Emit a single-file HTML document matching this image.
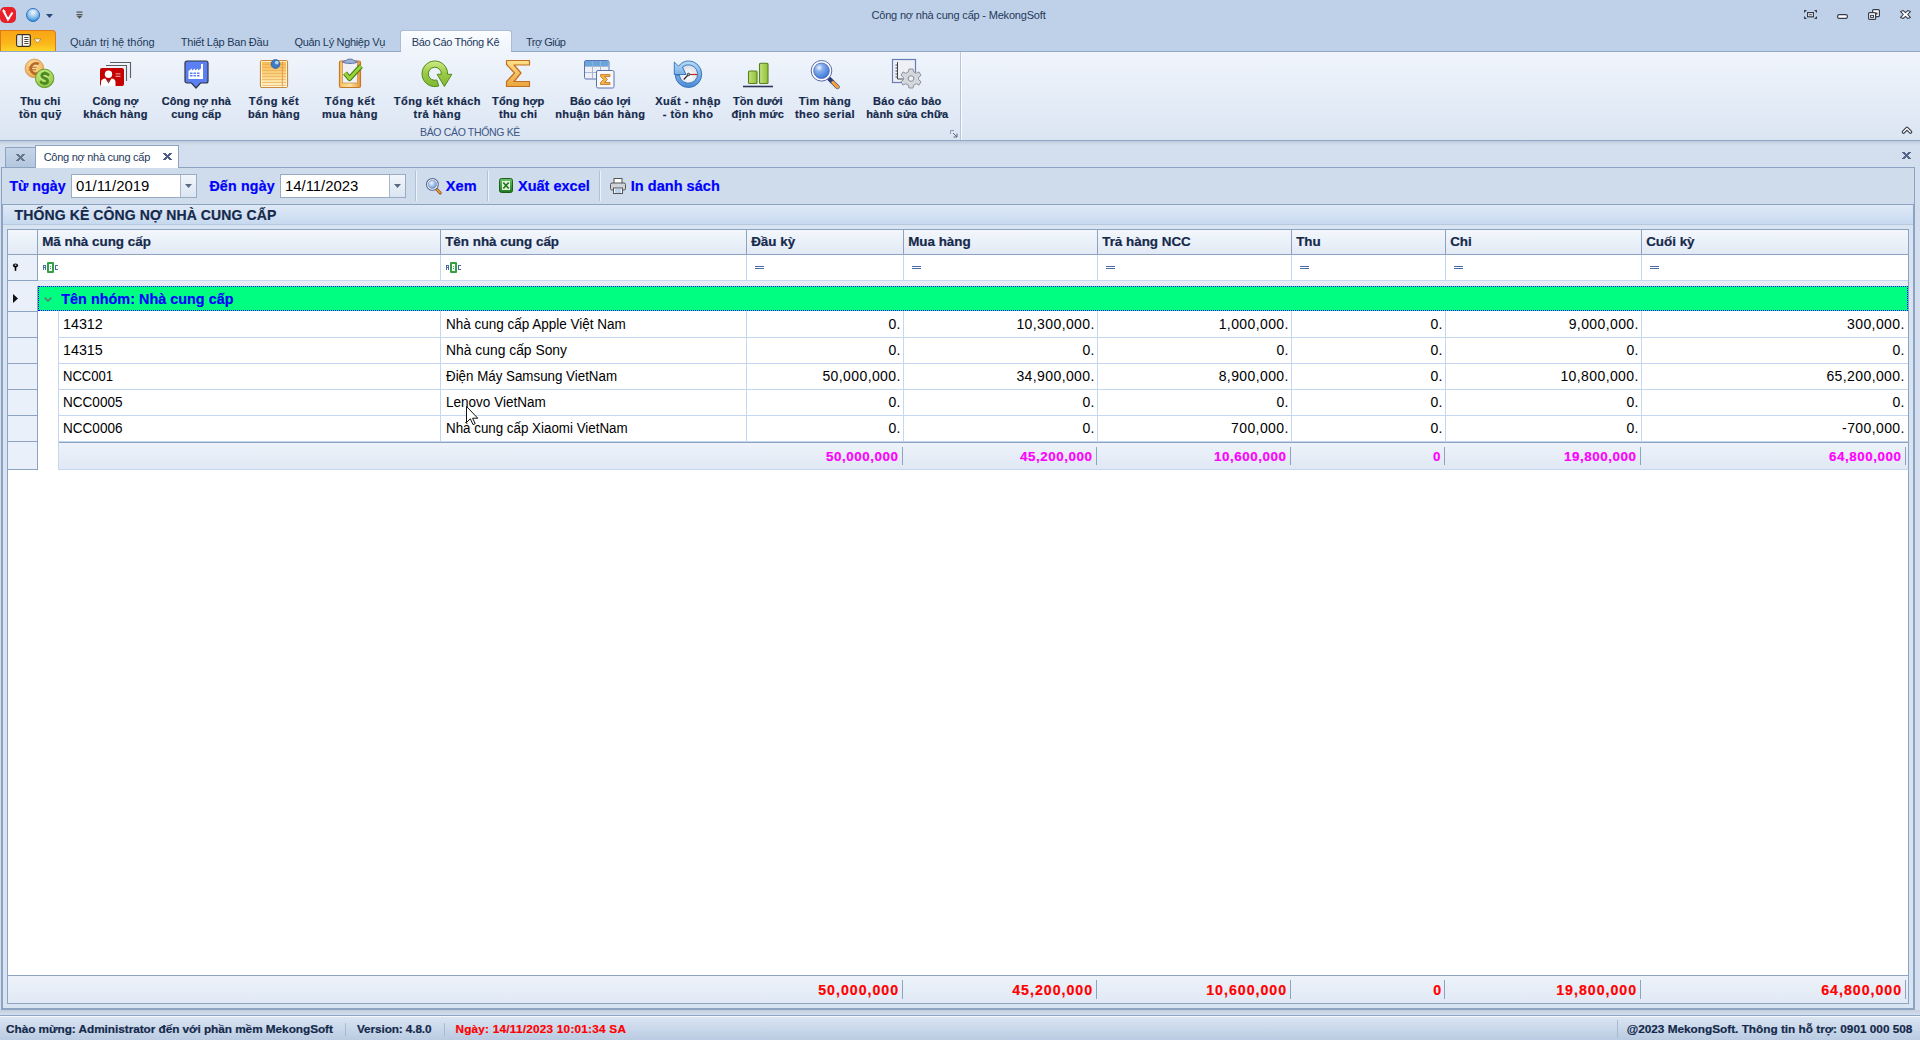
<!DOCTYPE html>
<html><head><meta charset="utf-8">
<style>
*{margin:0;padding:0;box-sizing:border-box}
html,body{width:1920px;height:1040px;overflow:hidden;background:#d5e1f0;font-family:"Liberation Sans",sans-serif}
.a{position:absolute}
.t{position:absolute;white-space:nowrap;line-height:1}
svg{overflow:visible}
</style></head><body>

<div class="a" style="left:0px;top:0px;width:1920px;height:51px;background:#bfd1e8"></div>
<svg class="a" style="left:0px;top:7px;" width="16" height="16" viewBox="0 0 16 16"><rect x="0" y="0" width="16" height="16" rx="5" fill="#e8202a"/><path d="M3 3 L8 12.5 L12.5 5.5" stroke="#fff" stroke-width="2" fill="none"/><path d="M3 2.5 L5.5 4.5" stroke="#fff" stroke-width="1" fill="none"/></svg>
<svg class="a" style="left:26px;top:8px;" width="14" height="14" viewBox="0 0 14 14"><defs><radialGradient id="gl" cx="50%" cy="30%" r="70%"><stop offset="0" stop-color="#f4f8fc"/><stop offset="0.5" stop-color="#9cc9ee"/><stop offset="1" stop-color="#2a8ad8"/></radialGradient></defs><circle cx="7" cy="7" r="6.5" fill="url(#gl)" stroke="#2d6fc2" stroke-width="1"/></svg>
<svg class="a" style="left:46px;top:14px;" width="7" height="4" viewBox="0 0 7 4"><path d="M0 0 H7 L3.5 4 Z" fill="#2a4a7a"/></svg>
<svg class="a" style="left:76px;top:11px;" width="7" height="8" viewBox="0 0 7 8"><rect x="0.5" y="0.5" width="6" height="1.2" fill="#555"/><rect x="0.5" y="3" width="6" height="1.2" fill="#555"/><path d="M0.5 4.8 H6.5 L3.5 7.8 Z" fill="#555"/></svg>
<div class="t" style="left:871.50px;top:9.69px;font-size:11px;color:#1e395b;letter-spacing:-0.190px;">Công nợ nhà cung cấp - MekongSoft</div>
<svg class="a" style="left:1804px;top:10px;" width="13" height="9" viewBox="0 0 13 9"><path d="M0 0 H3 L0 3 Z M13 0 H10 L13 3 Z M0 9 H3 L0 6 Z M13 9 H10 L13 6 Z" fill="#363c4a"/><rect x="3.6" y="2.6" width="5.8" height="4.2" fill="#fff" stroke="#363c4a" stroke-width="1.2"/><rect x="5" y="4.3" width="3" height="1" fill="#363c4a"/></svg>
<svg class="a" style="left:1837px;top:14px;" width="11" height="5" viewBox="0 0 11 5"><rect x="0.6" y="0.6" width="9.8" height="3.8" rx="1.6" fill="#fff" stroke="#363c4a" stroke-width="1.2"/></svg>
<svg class="a" style="left:1868px;top:9px;" width="12" height="11" viewBox="0 0 12 11"><rect x="4.6" y="0.6" width="6.8" height="7" rx="1" fill="#fff" stroke="#363c4a" stroke-width="1.2"/><rect x="7.5" y="3.5" width="2" height="2" fill="#363c4a"/><rect x="0.6" y="3.6" width="7" height="6.8" rx="1" fill="#fff" stroke="#363c4a" stroke-width="1.2"/><rect x="2.6" y="6.4" width="3" height="2" fill="#fff" stroke="#363c4a" stroke-width="1"/></svg>
<svg class="a" style="left:1900px;top:10px;" width="11" height="9" viewBox="0 0 11 9"><path d="M0.6 1.6 L3.3 0.6 L5.5 2.6 L7.7 0.6 L10.4 1.6 L7.7 4.5 L10.4 7.4 L7.7 8.4 L5.5 6.4 L3.3 8.4 L0.6 7.4 L3.3 4.5 Z" fill="#fff" stroke="#363c4a" stroke-width="1.1" stroke-linejoin="round"/></svg>
<div class="a" style="left:0px;top:30px;width:56px;height:21px;background:linear-gradient(#f8a416,#fbb61a 60%,#fdd42a);border:1px solid #e0781c;border-bottom:none;border-radius:0 4px 0 0"></div>
<svg class="a" style="left:16px;top:34px;" width="15" height="13" viewBox="0 0 15 13"><rect x="0.7" y="0.7" width="13.6" height="11.6" rx="1.5" fill="#fff" stroke="#3b3020" stroke-width="1.3"/><rect x="1.5" y="1.5" width="4.5" height="10" fill="#e6e6e6"/><path d="M6.3 0.7 V12.3" stroke="#3b3020" stroke-width="1"/><path d="M8.3 3.5 H12.5 M8.3 5.5 H12.5 M8.3 7.5 H12.5 M8.3 9.5 H12.5" stroke="#3b3020" stroke-width="0.9"/></svg>
<svg class="a" style="left:34px;top:39px;" width="7" height="4" viewBox="0 0 7 4"><path d="M0 0 H7 L3.5 4 Z" fill="#fff" stroke="#7a5a1a" stroke-width="0.5"/></svg>
<div class="a" style="left:400px;top:30px;width:112px;height:22px;background:linear-gradient(#fbfdff,#eef4fb);border:1px solid #a9bdd6;border-bottom:none;border-radius:3px 3px 0 0"></div>
<div class="a" style="left:0px;top:51px;width:1920px;height:1px;background:#91a8c6"></div>
<div class="a" style="left:401px;top:51px;width:110px;height:1px;background:#f0f5fc"></div>
<div class="t" style="left:70.00px;top:37.19px;font-size:11px;color:#1e395b;letter-spacing:-0.018px;">Quản trị hệ thống</div>
<div class="t" style="left:180.80px;top:37.19px;font-size:11px;color:#1e395b;letter-spacing:-0.249px;">Thiết Lập Ban Đầu</div>
<div class="t" style="left:294.50px;top:37.19px;font-size:11px;color:#1e395b;letter-spacing:-0.324px;">Quản Lý Nghiệp Vụ</div>
<div class="t" style="left:411.70px;top:37.19px;font-size:11px;color:#1e395b;letter-spacing:-0.367px;">Báo Cáo Thống Kê</div>
<div class="t" style="left:526.00px;top:37.19px;font-size:11px;color:#1e395b;letter-spacing:-0.510px;">Trợ Giúp</div>
<div class="a" style="left:0px;top:52px;width:1920px;height:88px;background:linear-gradient(#f0f5fc,#e4ecf7 55%,#dbe5f2)"></div>
<div class="a" style="left:0px;top:140px;width:1920px;height:1px;background:#8fa6c4"></div>
<div class="a" style="left:960px;top:52px;width:1px;height:88px;background:#b6c7dc"></div>
<div class="a" style="left:961px;top:52px;width:1px;height:88px;background:#f6f9fd"></div>
<svg class="a" style="left:24px;top:58px;" width="32" height="32" viewBox="0 0 32 32"><defs><radialGradient id="co1" cx="45%" cy="35%" r="65%"><stop offset="0" stop-color="#fde6aa"/><stop offset="0.7" stop-color="#f2bc66"/><stop offset="1" stop-color="#e0a050"/></radialGradient><radialGradient id="co2" cx="45%" cy="35%" r="65%"><stop offset="0" stop-color="#d8f29a"/><stop offset="0.7" stop-color="#9cd050"/><stop offset="1" stop-color="#6eaa30"/></radialGradient></defs><circle cx="10.4" cy="10.4" r="9.3" fill="url(#co1)" stroke="#d8934a" stroke-width="0.8"/><path d="M14.8 6.2 A5.2 5.2 0 1 0 14.2 15.2" stroke="#b8682a" stroke-width="2.6" fill="none"/><path d="M4.6 9.3 H12.6 M4.6 11.8 H12" stroke="#b8682a" stroke-width="1.1"/><circle cx="20.6" cy="20.4" r="9.3" fill="url(#co2)" stroke="#5a9620" stroke-width="0.8"/><circle cx="20.6" cy="20.4" r="7.6" fill="none" stroke="#c4e88a" stroke-width="0.7" opacity="0.7"/><path d="M24.2 16.8 C23 15 17.8 14.8 17.8 17.8 C17.8 20.6 23.6 19.6 23.6 23 C23.6 26.2 18.4 26 17 24" stroke="#4e8a22" stroke-width="2.8" fill="none" stroke-linecap="round"/><path d="M20.8 13.6 V15.4 M20.5 25.6 V27.2" stroke="#4e8a22" stroke-width="1.6"/></svg>
<svg class="a" style="left:99px;top:60px;" width="33" height="28" viewBox="0 0 33 28"><path d="M7 5.5 H27.5 V21" stroke="#5e5e5e" stroke-width="1.1" fill="none"/><path d="M11 2.5 H31.5 V18" stroke="#5e5e5e" stroke-width="1.1" fill="none"/><rect x="1" y="8" width="24" height="18" rx="2" fill="#c40000"/><circle cx="9.5" cy="14.2" r="3.7" fill="#fff"/><path d="M2 26 V22 C2 20 4 18.6 6.5 18.6 L9.5 23.5 L12.5 18.6 C15 18.6 16.5 20 16.5 22 V26 Z" fill="#fff"/><path d="M9.5 19.6 L10.4 21.5 L9.5 23.3 L8.6 21.5 Z" fill="#5a6068"/><path d="M16.5 13.8 H21.5" stroke="#e88080" stroke-width="1.3"/><path d="M16.5 16.3 H21.5" stroke="#f4b0b0" stroke-width="1"/></svg>
<svg class="a" style="left:184px;top:60px;" width="25" height="30" viewBox="0 0 25 30"><path d="M3 1 H22 A2 2 0 0 1 24 3 V21 A2 2 0 0 1 22 23 H16.5 L12 28 L7.5 23 H3 A2 2 0 0 1 1 21 V3 A2 2 0 0 1 3 1 Z" fill="#5b80f4" stroke="#2f3440" stroke-width="1.2"/><path d="M4.5 19 V11 L8 8.5 V10.5 L11 8.5 V10.5 L14 8.5 V10.5 L17 8.5 V4 H19 V19 Z" fill="#fff"/><rect x="6" y="12.5" width="2.5" height="1.5" fill="#5b80f4"/><rect x="9.5" y="12.5" width="2.5" height="1.5" fill="#5b80f4"/><rect x="13" y="12.5" width="2.5" height="1.5" fill="#5b80f4"/><rect x="6" y="15" width="2.5" height="1.5" fill="#5b80f4"/><rect x="9.5" y="15" width="2.5" height="1.5" fill="#5b80f4"/><rect x="13" y="15" width="2.5" height="1.5" fill="#5b80f4"/></svg>
<svg class="a" style="left:259px;top:58px;" width="31" height="32" viewBox="0 0 31 32"><defs><linearGradient id="np" x1="0" y1="0" x2="0" y2="1"><stop offset="0" stop-color="#f6b84c"/><stop offset="0.6" stop-color="#fbd88a"/><stop offset="1" stop-color="#fff4d0"/></linearGradient></defs><rect x="1.5" y="2.5" width="27" height="27" rx="1.8" fill="url(#np)" stroke="#c98a40" stroke-width="1.2"/><rect x="2.6" y="3.6" width="24.8" height="24.8" fill="none" stroke="#fff8e0" stroke-width="0.9"/><path d="M3.2 6.5 H26.8" stroke="#eba850" stroke-width="0.8" opacity="0.8"/><path d="M3.2 9.5 H26.8" stroke="#eba850" stroke-width="0.8" opacity="0.8"/><path d="M3.2 12.5 H26.8" stroke="#eba850" stroke-width="0.8" opacity="0.8"/><path d="M3.2 15.5 H26.8" stroke="#eba850" stroke-width="0.8" opacity="0.8"/><path d="M3.2 18.5 H26.8" stroke="#eba850" stroke-width="0.8" opacity="0.8"/><path d="M3.2 21.5 H26.8" stroke="#eba850" stroke-width="0.8" opacity="0.8"/><path d="M3.2 24.5 H26.8" stroke="#eba850" stroke-width="0.8" opacity="0.8"/><path d="M3.2 27.5 H26.8" stroke="#eba850" stroke-width="0.8" opacity="0.8"/><path d="M23.4 3.5 V28.5" stroke="#e09050" stroke-width="0.8"/><circle cx="16.5" cy="6" r="4.4" fill="#3f7ac4" stroke="#2a5a9a" stroke-width="0.8"/><circle cx="17.8" cy="4.6" r="1.9" fill="#b0d4f4"/></svg>
<svg class="a" style="left:338px;top:58px;" width="26" height="32" viewBox="0 0 26 32"><defs><linearGradient id="cb" x1="0" y1="0" x2="1" y2="0"><stop offset="0" stop-color="#f6c060"/><stop offset="0.5" stop-color="#fde2a0"/><stop offset="1" stop-color="#e49a3c"/></linearGradient></defs><rect x="1.5" y="3" width="21" height="26.5" rx="1.5" fill="url(#cb)" stroke="#c5782a" stroke-width="1.2"/><rect x="4.5" y="4.5" width="15" height="20.5" fill="#eef1f6" stroke="#c5782a" stroke-width="0.6"/><path d="M4.5 3.8 C6 2.6 8.5 3 9.8 1.2 H14.2 C15.5 3 18 2.6 19.5 3.8 C18 6 6 6 4.5 3.8 Z" fill="#9fb2d8" stroke="#4f68a8" stroke-width="0.9"/><path d="M7 15 L11.5 20.5 L23 8" stroke="#3d7a10" stroke-width="5" fill="none" stroke-linejoin="round"/><path d="M7 15 L11.5 20.5 L23 8" stroke="#9ad23a" stroke-width="3" fill="none" stroke-linejoin="round"/></svg>
<svg class="a" style="left:421px;top:60px;" width="34" height="30" viewBox="0 0 34 30"><defs><linearGradient id="rg" x1="0" y1="0" x2="0" y2="1"><stop offset="0" stop-color="#d2ec86"/><stop offset="0.45" stop-color="#9ccc48"/><stop offset="1" stop-color="#80b830"/></linearGradient></defs><path d="M26.6 14.3 A12.8 12.8 0 1 0 17.76 25.97 L15.8 19.98 A6.5 6.5 0 1 1 20.3 14.3 L16.1 14.3 L23.4 26.5 L30.8 14.3 Z" fill="url(#rg)" stroke="#4f8a1a" stroke-width="1" stroke-linejoin="round"/></svg>
<svg class="a" style="left:505px;top:59px;" width="27" height="29" viewBox="0 0 27 29"><defs><linearGradient id="sg" x1="0" y1="0" x2="0" y2="1"><stop offset="0" stop-color="#fde08a"/><stop offset="1" stop-color="#eba43c"/></linearGradient></defs><path d="M1.5 1.5 H24.5 V6 H9 L16 14 L9 22.5 H24.5 V27.5 H1.5 V22.5 L9.5 14 L1.5 5.5 Z" fill="url(#sg)" stroke="#c16f20" stroke-width="1.2" stroke-linejoin="round"/></svg>
<svg class="a" style="left:583px;top:59px;" width="32" height="30" viewBox="0 0 32 30"><rect x="1.5" y="1.5" width="24.5" height="18.5" rx="1.5" fill="#eef0f6" stroke="#5a72b0" stroke-width="1"/><rect x="2" y="2" width="23.5" height="5" fill="#6aa4dc"/><path d="M2 7.5 H25.5 M2 13.5 H25.5 M9.5 2 V20 M17.5 2 V20" stroke="#a0b0d4" stroke-width="0.9"/><rect x="13.5" y="11.5" width="17.5" height="17.5" rx="1.5" fill="#f8f9fc" stroke="#5a72b0" stroke-width="1"/><path d="M17.5 15.5 H27 V17.5 H21.5 L24.5 20.5 L21.5 23.5 H27 V25.5 H17.5 V23.5 L20.5 20.5 L17.5 17.5 Z" fill="#f2b444" stroke="#c16f20" stroke-width="0.8"/></svg>
<svg class="a" style="left:673px;top:59px;" width="30" height="30" viewBox="0 0 30 30"><defs><linearGradient id="ck" x1="0" y1="0" x2="0" y2="1"><stop offset="0" stop-color="#b8dcf6"/><stop offset="0.5" stop-color="#7ab2e6"/><stop offset="1" stop-color="#4a8ad4"/></linearGradient><radialGradient id="cf" cx="50%" cy="60%" r="60%"><stop offset="0" stop-color="#ffffff"/><stop offset="1" stop-color="#d8dce6"/></radialGradient></defs><circle cx="15.5" cy="15.2" r="9.4" fill="url(#cf)"/><path d="M15.5 1.9 A13.3 13.3 0 1 1 2.2 16.4 L6.3 16.1 A9.2 9.2 0 1 0 9.5 8 L13 15.5 H1.3 V3 L5.5 7.2 A13.3 13.3 0 0 1 15.5 1.9 Z" fill="url(#ck)" stroke="#2f6db8" stroke-width="0.9" stroke-linejoin="round"/><path d="M15.5 15.5 H24" stroke="#c82a1a" stroke-width="1.2"/><path d="M15.5 15.5 L10.8 20.5" stroke="#2a2a30" stroke-width="1.3"/><circle cx="15.5" cy="15.5" r="1.3" fill="#8ab8e0" stroke="#2a2a30" stroke-width="0.8"/></svg>
<svg class="a" style="left:742px;top:62px;" width="32" height="26" viewBox="0 0 32 26"><defs><linearGradient id="bg" x1="0" y1="0" x2="1" y2="0"><stop offset="0" stop-color="#c4e27a"/><stop offset="1" stop-color="#8fc03a"/></linearGradient></defs><rect x="6.5" y="9" width="8.5" height="12.5" rx="1" fill="url(#bg)" stroke="#55801c" stroke-width="1.1"/><rect x="17.5" y="1.2" width="8.5" height="20.3" rx="1" fill="url(#bg)" stroke="#55801c" stroke-width="1.1"/><path d="M1 24.5 H31" stroke="#2c3458" stroke-width="1.6"/></svg>
<svg class="a" style="left:810px;top:59px;" width="32" height="30" viewBox="0 0 32 30"><defs><radialGradient id="mg" cx="35%" cy="30%" r="70%"><stop offset="0" stop-color="#f2f6ff"/><stop offset="0.35" stop-color="#86aef0"/><stop offset="1" stop-color="#3e7ad8"/></radialGradient></defs><path d="M19.5 20 L27.5 28" stroke="#2c3c78" stroke-width="4.4" stroke-linecap="round"/><path d="M23 23.5 L27.5 28" stroke="#f0a040" stroke-width="3.2" stroke-linecap="round"/><circle cx="11.5" cy="11.8" r="10.3" fill="#fff" stroke="#5668a8" stroke-width="1"/><circle cx="11.5" cy="11.8" r="7.8" fill="url(#mg)" stroke="#4a64b4" stroke-width="0.8"/></svg>
<svg class="a" style="left:891px;top:58px;" width="32" height="32" viewBox="0 0 32 32"><rect x="1.5" y="1.5" width="23" height="23" fill="#eef0f6" stroke="#6a7cb8" stroke-width="1.2"/><path d="M6.5 4 V21 H12" stroke="#333" stroke-width="0.9" fill="none"/><path d="M4.5 7 H6.5 M4.5 10 H6.5 M4.5 13 H6.5 M4.5 16 H6.5 M4.5 19 H6.5" stroke="#333" stroke-width="0.9"/><g transform="translate(20,20.5)"><path d="M-2 -9.5 L2 -9.5 L2.8 -6.5 L5.3 -5.2 L8 -6.6 L10 -3.2 L7.6 -1.3 L7.6 1.3 L10 3.2 L8 6.6 L5.3 5.2 L2.8 6.5 L2 9.5 L-2 9.5 L-2.8 6.5 L-5.3 5.2 L-8 6.6 L-10 3.2 L-7.6 1.3 L-7.6 -1.3 L-10 -3.2 L-8 -6.6 L-5.3 -5.2 L-2.8 -6.5 Z" fill="#d4d8de" stroke="#8e949c" stroke-width="1"/><circle r="2.8" fill="#eef0f2" stroke="#8e949c" stroke-width="1.1"/></g></svg>
<div class="t" style="left:20.15px;top:96.19px;font-size:11px;color:#15294b;font-weight:bold;-webkit-text-stroke:0.2px #15294b;letter-spacing:0.170px;">Thu chi</div>
<div class="t" style="left:18.90px;top:109.29px;font-size:11px;color:#15294b;font-weight:bold;-webkit-text-stroke:0.2px #15294b;letter-spacing:0.441px;">tồn quỹ</div>
<div class="t" style="left:92.60px;top:96.19px;font-size:11px;color:#15294b;font-weight:bold;-webkit-text-stroke:0.2px #15294b;letter-spacing:0.015px;">Công nợ</div>
<div class="t" style="left:83.22px;top:109.29px;font-size:11px;color:#15294b;font-weight:bold;-webkit-text-stroke:0.2px #15294b;letter-spacing:0.343px;">khách hàng</div>
<div class="t" style="left:161.65px;top:96.19px;font-size:11px;color:#15294b;font-weight:bold;-webkit-text-stroke:0.2px #15294b;letter-spacing:0.090px;">Công nợ nhà</div>
<div class="t" style="left:171.15px;top:109.29px;font-size:11px;color:#15294b;font-weight:bold;-webkit-text-stroke:0.2px #15294b;letter-spacing:0.252px;">cung cấp</div>
<div class="t" style="left:248.85px;top:96.19px;font-size:11px;color:#15294b;font-weight:bold;-webkit-text-stroke:0.2px #15294b;letter-spacing:0.558px;">Tổng kết</div>
<div class="t" style="left:247.97px;top:109.29px;font-size:11px;color:#15294b;font-weight:bold;-webkit-text-stroke:0.2px #15294b;letter-spacing:0.395px;">bán hàng</div>
<div class="t" style="left:324.85px;top:96.19px;font-size:11px;color:#15294b;font-weight:bold;-webkit-text-stroke:0.2px #15294b;letter-spacing:0.558px;">Tổng kết</div>
<div class="t" style="left:322.10px;top:109.29px;font-size:11px;color:#15294b;font-weight:bold;-webkit-text-stroke:0.2px #15294b;letter-spacing:0.481px;">mua hàng</div>
<div class="t" style="left:393.75px;top:96.19px;font-size:11px;color:#15294b;font-weight:bold;-webkit-text-stroke:0.2px #15294b;letter-spacing:0.473px;">Tổng kết khách</div>
<div class="t" style="left:413.55px;top:109.29px;font-size:11px;color:#15294b;font-weight:bold;-webkit-text-stroke:0.2px #15294b;letter-spacing:0.538px;">trả hàng</div>
<div class="t" style="left:492.10px;top:96.19px;font-size:11px;color:#15294b;font-weight:bold;-webkit-text-stroke:0.2px #15294b;letter-spacing:0.138px;">Tổng hợp</div>
<div class="t" style="left:499.10px;top:109.29px;font-size:11px;color:#15294b;font-weight:bold;-webkit-text-stroke:0.2px #15294b;letter-spacing:0.321px;">thu chi</div>
<div class="t" style="left:569.90px;top:96.19px;font-size:11px;color:#15294b;font-weight:bold;-webkit-text-stroke:0.2px #15294b;letter-spacing:0.093px;">Báo cáo lợi</div>
<div class="t" style="left:555.20px;top:109.29px;font-size:11px;color:#15294b;font-weight:bold;-webkit-text-stroke:0.2px #15294b;letter-spacing:0.376px;">nhuận bán hàng</div>
<div class="t" style="left:655.20px;top:96.19px;font-size:11px;color:#15294b;font-weight:bold;-webkit-text-stroke:0.2px #15294b;letter-spacing:0.537px;">Xuất - nhập</div>
<div class="t" style="left:662.70px;top:109.29px;font-size:11px;color:#15294b;font-weight:bold;-webkit-text-stroke:0.2px #15294b;letter-spacing:0.485px;">- tồn kho</div>
<div class="t" style="left:732.90px;top:96.19px;font-size:11px;color:#15294b;font-weight:bold;-webkit-text-stroke:0.2px #15294b;letter-spacing:0.128px;">Tồn dưới</div>
<div class="t" style="left:731.45px;top:109.29px;font-size:11px;color:#15294b;font-weight:bold;-webkit-text-stroke:0.2px #15294b;letter-spacing:0.321px;">định mức</div>
<div class="t" style="left:798.80px;top:96.19px;font-size:11px;color:#15294b;font-weight:bold;-webkit-text-stroke:0.2px #15294b;letter-spacing:0.439px;">Tìm hàng</div>
<div class="t" style="left:794.90px;top:109.29px;font-size:11px;color:#15294b;font-weight:bold;-webkit-text-stroke:0.2px #15294b;letter-spacing:0.471px;">theo serial</div>
<div class="t" style="left:873.00px;top:96.19px;font-size:11px;color:#15294b;font-weight:bold;-webkit-text-stroke:0.2px #15294b;letter-spacing:0.290px;">Báo cáo bảo</div>
<div class="t" style="left:866.20px;top:109.29px;font-size:11px;color:#15294b;font-weight:bold;-webkit-text-stroke:0.2px #15294b;letter-spacing:0.207px;">hành sửa chữa</div>
<div class="t" style="left:420.00px;top:127.11px;font-size:10.5px;color:#3b5585;letter-spacing:-0.338px;">BÁO CÁO THỐNG KÊ</div>
<svg class="a" style="left:950px;top:130px;" width="8" height="8" viewBox="0 0 8 8"><path d="M0.5 0.5 H4 M0.5 0.5 V4" stroke="#8a9ab0" stroke-width="1"/><path d="M3 3 L7 7 M7 3.5 V7 H3.5" stroke="#5a6a80" stroke-width="1" fill="none"/></svg>
<svg class="a" style="left:1902px;top:125.5px;" width="10" height="8" viewBox="0 0 10 8"><path d="M1.5 6 L5 2.5 L8.5 6" stroke="#333a48" stroke-width="3.6" fill="none" stroke-linejoin="round" stroke-linecap="round"/><path d="M1.5 6 L5 2.5 L8.5 6" stroke="#fff" stroke-width="1.4" fill="none" stroke-linecap="round"/></svg>
<div class="a" style="left:0px;top:141px;width:1920px;height:874px;background:#d3dfef"></div>
<div class="a" style="left:0px;top:141px;width:1920px;height:4px;background:linear-gradient(#bccadb,#d3dfef)"></div>
<div class="a" style="left:5px;top:147px;width:31px;height:21px;background:linear-gradient(#c6d5e8,#b3c6de);border:1px solid #8ea3c1;border-bottom:none"></div>
<svg class="a" style="left:16px;top:154px;shape-rendering:crispEdges;" width="9" height="7" viewBox="0 0 9 7"><rect x="0" y="0" width="3" height="1" fill="#67758c"/><rect x="6" y="0" width="3" height="1" fill="#67758c"/><rect x="1" y="1" width="3" height="1" fill="#67758c"/><rect x="5" y="1" width="3" height="1" fill="#67758c"/><rect x="2" y="2" width="5" height="1" fill="#67758c"/><rect x="3" y="3" width="3" height="1" fill="#67758c"/><rect x="2" y="4" width="5" height="1" fill="#67758c"/><rect x="1" y="5" width="3" height="1" fill="#67758c"/><rect x="5" y="5" width="3" height="1" fill="#67758c"/><rect x="0" y="6" width="3" height="1" fill="#67758c"/><rect x="6" y="6" width="3" height="1" fill="#67758c"/></svg>
<div class="a" style="left:35px;top:145px;width:144px;height:23px;background:#fff;border:1px solid #8ea3c1;border-bottom:none"></div>
<div class="t" style="left:43.70px;top:151.69px;font-size:11px;color:#1e395b;letter-spacing:-0.275px;">Công nợ nhà cung cấp</div>
<svg class="a" style="left:163px;top:153px;shape-rendering:crispEdges;" width="9" height="7" viewBox="0 0 9 7"><rect x="0" y="0" width="3" height="1" fill="#4d5f88"/><rect x="6" y="0" width="3" height="1" fill="#4d5f88"/><rect x="1" y="1" width="3" height="1" fill="#4d5f88"/><rect x="5" y="1" width="3" height="1" fill="#4d5f88"/><rect x="2" y="2" width="5" height="1" fill="#4d5f88"/><rect x="3" y="3" width="3" height="1" fill="#4d5f88"/><rect x="2" y="4" width="5" height="1" fill="#4d5f88"/><rect x="1" y="5" width="3" height="1" fill="#4d5f88"/><rect x="5" y="5" width="3" height="1" fill="#4d5f88"/><rect x="0" y="6" width="3" height="1" fill="#4d5f88"/><rect x="6" y="6" width="3" height="1" fill="#4d5f88"/></svg>
<svg class="a" style="left:1902px;top:152px;shape-rendering:crispEdges;" width="9" height="7" viewBox="0 0 9 7"><rect x="0" y="0" width="3" height="1" fill="#56668a"/><rect x="6" y="0" width="3" height="1" fill="#56668a"/><rect x="1" y="1" width="3" height="1" fill="#56668a"/><rect x="5" y="1" width="3" height="1" fill="#56668a"/><rect x="2" y="2" width="5" height="1" fill="#56668a"/><rect x="3" y="3" width="3" height="1" fill="#56668a"/><rect x="2" y="4" width="5" height="1" fill="#56668a"/><rect x="1" y="5" width="3" height="1" fill="#56668a"/><rect x="5" y="5" width="3" height="1" fill="#56668a"/><rect x="0" y="6" width="3" height="1" fill="#56668a"/><rect x="6" y="6" width="3" height="1" fill="#56668a"/></svg>
<div class="a" style="left:1px;top:167px;width:1914px;height:843px;background:#cfdced;border:1px solid #8ea3c1"></div>
<div class="a" style="left:0px;top:1010px;width:1920px;height:5px;background:linear-gradient(#c3cfdd,#d3dfee)"></div>
<div class="a" style="left:36px;top:167px;width:142px;height:1px;background:#fff"></div>
<div class="a" style="left:2px;top:168px;width:1912px;height:36px;background:#cfdcec"></div>
<div class="t" style="left:9.40px;top:179.48px;font-size:14.2px;color:#0000ff;font-weight:bold;-webkit-text-stroke:0.2px #0000ff;letter-spacing:0.022px;">Từ ngày</div>
<div class="a" style="left:71px;top:174px;width:126px;height:24px;background:#fff;border:1px solid #9aaac4"></div>
<div class="a" style="left:180px;top:175px;width:16px;height:22px;background:linear-gradient(#f2f6fb,#dbe5f1);border-left:1px solid #a9b8cf"></div>
<svg class="a" style="left:185px;top:184px;" width="7" height="4" viewBox="0 0 7 4"><path d="M0 0 H7 L3.5 4 Z" fill="#5a6a82"/></svg>
<div class="t" style="left:76.00px;top:178.69px;font-size:14.9px;color:#000;letter-spacing:-0.007px;">01/11/2019</div>
<div class="t" style="left:209.40px;top:179.48px;font-size:14.2px;color:#0000ff;font-weight:bold;-webkit-text-stroke:0.2px #0000ff;letter-spacing:0.211px;">Đến ngày</div>
<div class="a" style="left:280px;top:174px;width:126px;height:24px;background:#fff;border:1px solid #9aaac4"></div>
<div class="a" style="left:389px;top:175px;width:16px;height:22px;background:linear-gradient(#f2f6fb,#dbe5f1);border-left:1px solid #a9b8cf"></div>
<svg class="a" style="left:394px;top:184px;" width="7" height="4" viewBox="0 0 7 4"><path d="M0 0 H7 L3.5 4 Z" fill="#5a6a82"/></svg>
<div class="t" style="left:285.00px;top:178.69px;font-size:14.9px;color:#000;letter-spacing:-0.007px;">14/11/2023</div>
<div class="a" style="left:415px;top:171px;width:1px;height:30px;background:#b1c2d8"></div>
<div class="a" style="left:416px;top:171px;width:1px;height:30px;background:#eef3fa"></div>
<div class="a" style="left:487px;top:171px;width:1px;height:30px;background:#b1c2d8"></div>
<div class="a" style="left:488px;top:171px;width:1px;height:30px;background:#eef3fa"></div>
<div class="a" style="left:599px;top:171px;width:1px;height:30px;background:#b1c2d8"></div>
<div class="a" style="left:600px;top:171px;width:1px;height:30px;background:#eef3fa"></div>
<svg class="a" style="left:425px;top:177px;" width="18" height="18" viewBox="0 0 18 18"><defs><radialGradient id="mg2" cx="40%" cy="35%" r="65%"><stop offset="0" stop-color="#f4f6ff"/><stop offset="0.5" stop-color="#a8c8ee"/><stop offset="1" stop-color="#6a9ad8"/></radialGradient></defs><path d="M11.2 11.8 L15.2 16" stroke="#8a4a1a" stroke-width="3" stroke-linecap="round"/><path d="M11.6 12.2 L15 15.6" stroke="#f0a040" stroke-width="1.6" stroke-linecap="round"/><circle cx="7.4" cy="7.4" r="5.9" fill="#fff" stroke="#56658e" stroke-width="1.1"/><circle cx="7.4" cy="7.4" r="4.2" fill="url(#mg2)" stroke="#7a8ab8" stroke-width="0.7"/></svg>
<div class="t" style="left:445.80px;top:178.53px;font-size:14.5px;color:#0000ff;font-weight:bold;-webkit-text-stroke:0.2px #0000ff;letter-spacing:0.124px;">Xem</div>
<svg class="a" style="left:499px;top:178px;" width="14" height="15" viewBox="0 0 14 15"><defs><linearGradient id="xl" x1="0" y1="0" x2="0" y2="1"><stop offset="0" stop-color="#6cc46c"/><stop offset="1" stop-color="#1f7a1f"/></linearGradient></defs><rect x="0.5" y="0.5" width="13" height="14" rx="2" fill="url(#xl)" stroke="#1d5e1d" stroke-width="1"/><rect x="3" y="3" width="8" height="9" fill="#e8f4e0"/><path d="M4.3 4.5 L9.7 10.5 M9.7 4.5 L4.3 10.5" stroke="#1d7a1d" stroke-width="1.8"/></svg>
<div class="t" style="left:518.00px;top:178.53px;font-size:14.5px;color:#0000ff;font-weight:bold;-webkit-text-stroke:0.2px #0000ff;">Xuất excel</div>
<svg class="a" style="left:610px;top:178px;" width="16" height="16" viewBox="0 0 16 16"><rect x="4" y="0.5" width="8" height="5" fill="#fff" stroke="#555" stroke-width="1"/><rect x="0.5" y="5" width="15" height="7" rx="1.5" fill="#cfd4dc" stroke="#555" stroke-width="1"/><rect x="3.5" y="10" width="9" height="5.5" fill="#fff" stroke="#555" stroke-width="1"/><path d="M5 12 H11 M5 14 H11" stroke="#6a9ad8" stroke-width="0.9"/></svg>
<div class="t" style="left:630.80px;top:178.53px;font-size:14.5px;color:#0000ff;font-weight:bold;-webkit-text-stroke:0.2px #0000ff;letter-spacing:0.031px;">In danh sách</div>
<div class="a" style="left:2px;top:204px;width:1912px;height:805px;background:#d9e4f2;border:1px solid #8ea3c1"></div>
<div class="a" style="left:3px;top:205px;width:1910px;height:19px;background:linear-gradient(#dfe9f6,#c7d9ef)"></div>
<div class="a" style="left:3px;top:224px;width:1910px;height:1px;background:#b7c8de"></div>
<div class="t" style="left:14.50px;top:208.45px;font-size:14px;color:#15294b;font-weight:bold;-webkit-text-stroke:0.2px #15294b;letter-spacing:0.121px;">THỐNG KÊ CÔNG NỢ NHÀ CUNG CẤP</div>
<div class="a" style="left:7px;top:229px;width:1902px;height:775px;background:#fff;border:1px solid #8ea3c1"></div>
<div class="a" style="left:8px;top:230px;width:1900px;height:24px;background:linear-gradient(#f3f7fc,#e2eaf5)"></div>
<div class="a" style="left:8px;top:254px;width:1900px;height:1px;background:#8ea3c1"></div>
<div class="a" style="left:37px;top:230px;width:1px;height:25px;background:#8ea3c1"></div>
<div class="a" style="left:440px;top:230px;width:1px;height:25px;background:#8ea3c1"></div>
<div class="a" style="left:746px;top:230px;width:1px;height:25px;background:#8ea3c1"></div>
<div class="a" style="left:903px;top:230px;width:1px;height:25px;background:#8ea3c1"></div>
<div class="a" style="left:1097px;top:230px;width:1px;height:25px;background:#8ea3c1"></div>
<div class="a" style="left:1291px;top:230px;width:1px;height:25px;background:#8ea3c1"></div>
<div class="a" style="left:1445px;top:230px;width:1px;height:25px;background:#8ea3c1"></div>
<div class="a" style="left:1641px;top:230px;width:1px;height:25px;background:#8ea3c1"></div>
<div class="t" style="left:42.20px;top:235.36px;font-size:13.4px;color:#15294b;font-weight:bold;-webkit-text-stroke:0.2px #15294b;">Mã nhà cung cấp</div>
<div class="t" style="left:445.20px;top:235.36px;font-size:13.4px;color:#15294b;font-weight:bold;-webkit-text-stroke:0.2px #15294b;">Tên nhà cung cấp</div>
<div class="t" style="left:751.20px;top:235.36px;font-size:13.4px;color:#15294b;font-weight:bold;-webkit-text-stroke:0.2px #15294b;">Đầu kỳ</div>
<div class="t" style="left:908.20px;top:235.36px;font-size:13.4px;color:#15294b;font-weight:bold;-webkit-text-stroke:0.2px #15294b;">Mua hàng</div>
<div class="t" style="left:1102.20px;top:235.36px;font-size:13.4px;color:#15294b;font-weight:bold;-webkit-text-stroke:0.2px #15294b;">Trả hàng NCC</div>
<div class="t" style="left:1296.20px;top:235.36px;font-size:13.4px;color:#15294b;font-weight:bold;-webkit-text-stroke:0.2px #15294b;">Thu</div>
<div class="t" style="left:1450.20px;top:235.36px;font-size:13.4px;color:#15294b;font-weight:bold;-webkit-text-stroke:0.2px #15294b;">Chi</div>
<div class="t" style="left:1646.20px;top:235.36px;font-size:13.4px;color:#15294b;font-weight:bold;-webkit-text-stroke:0.2px #15294b;">Cuối kỳ</div>
<div class="a" style="left:8px;top:255px;width:30px;height:25px;background:#e9f0fa"></div>
<div class="a" style="left:8px;top:280px;width:30px;height:1px;background:#8ea3c1"></div>
<div class="a" style="left:37px;top:255px;width:1px;height:26px;background:#8ea3c1"></div>
<div class="a" style="left:38px;top:280px;width:1870px;height:1px;background:#c4d7f0"></div>
<div class="a" style="left:440px;top:255px;width:1px;height:25px;background:#c4d7f0"></div>
<div class="a" style="left:746px;top:255px;width:1px;height:25px;background:#c4d7f0"></div>
<div class="a" style="left:903px;top:255px;width:1px;height:25px;background:#c4d7f0"></div>
<div class="a" style="left:1097px;top:255px;width:1px;height:25px;background:#c4d7f0"></div>
<div class="a" style="left:1291px;top:255px;width:1px;height:25px;background:#c4d7f0"></div>
<div class="a" style="left:1445px;top:255px;width:1px;height:25px;background:#c4d7f0"></div>
<div class="a" style="left:1641px;top:255px;width:1px;height:25px;background:#c4d7f0"></div>
<svg class="a" style="left:12px;top:263px;" width="7" height="9" viewBox="0 0 7 9"><ellipse cx="3.5" cy="2.5" rx="2.6" ry="1.9" fill="#000"/><ellipse cx="3.5" cy="2.1" rx="1.2" ry="0.6" fill="#fff"/><path d="M3.5 3.5 L3.5 7.8" stroke="#000" stroke-width="1.6"/></svg>
<div class="a" style="left:43px;top:266px;width:1px;height:4px;background:#4a6aa8"></div>
<div class="a" style="left:45px;top:266px;width:1px;height:4px;background:#4a6aa8"></div>
<div class="a" style="left:43px;top:265px;width:3px;height:1px;background:#4a6aa8"></div>
<div class="a" style="left:43px;top:267px;width:3px;height:1px;background:#4a6aa8"></div>
<div class="a" style="left:47px;top:262px;width:7px;height:11px;background:#33a043;border-radius:1px"></div>
<div class="a" style="left:49px;top:264px;width:3px;height:7px;background:#fff"></div>
<div class="a" style="left:50px;top:266px;width:1px;height:1px;background:#33a043"></div>
<div class="a" style="left:50px;top:268px;width:1px;height:1px;background:#33a043"></div>
<div class="a" style="left:55px;top:265px;width:3px;height:1px;background:#4a6aa8"></div>
<div class="a" style="left:55px;top:266px;width:1px;height:3px;background:#4a6aa8"></div>
<div class="a" style="left:55px;top:269px;width:3px;height:1px;background:#4a6aa8"></div>
<div class="a" style="left:446px;top:266px;width:1px;height:4px;background:#4a6aa8"></div>
<div class="a" style="left:448px;top:266px;width:1px;height:4px;background:#4a6aa8"></div>
<div class="a" style="left:446px;top:265px;width:3px;height:1px;background:#4a6aa8"></div>
<div class="a" style="left:446px;top:267px;width:3px;height:1px;background:#4a6aa8"></div>
<div class="a" style="left:450px;top:262px;width:7px;height:11px;background:#33a043;border-radius:1px"></div>
<div class="a" style="left:452px;top:264px;width:3px;height:7px;background:#fff"></div>
<div class="a" style="left:453px;top:266px;width:1px;height:1px;background:#33a043"></div>
<div class="a" style="left:453px;top:268px;width:1px;height:1px;background:#33a043"></div>
<div class="a" style="left:458px;top:265px;width:3px;height:1px;background:#4a6aa8"></div>
<div class="a" style="left:458px;top:266px;width:1px;height:3px;background:#4a6aa8"></div>
<div class="a" style="left:458px;top:269px;width:3px;height:1px;background:#4a6aa8"></div>
<div class="a" style="left:755px;top:266px;width:9px;height:1px;background:#4a6aa8"></div>
<div class="a" style="left:755px;top:268px;width:9px;height:1px;background:#4a6aa8"></div>
<div class="a" style="left:912px;top:266px;width:9px;height:1px;background:#4a6aa8"></div>
<div class="a" style="left:912px;top:268px;width:9px;height:1px;background:#4a6aa8"></div>
<div class="a" style="left:1106px;top:266px;width:9px;height:1px;background:#4a6aa8"></div>
<div class="a" style="left:1106px;top:268px;width:9px;height:1px;background:#4a6aa8"></div>
<div class="a" style="left:1300px;top:266px;width:9px;height:1px;background:#4a6aa8"></div>
<div class="a" style="left:1300px;top:268px;width:9px;height:1px;background:#4a6aa8"></div>
<div class="a" style="left:1454px;top:266px;width:9px;height:1px;background:#4a6aa8"></div>
<div class="a" style="left:1454px;top:268px;width:9px;height:1px;background:#4a6aa8"></div>
<div class="a" style="left:1650px;top:266px;width:9px;height:1px;background:#4a6aa8"></div>
<div class="a" style="left:1650px;top:268px;width:9px;height:1px;background:#4a6aa8"></div>
<div class="a" style="left:8px;top:281px;width:1900px;height:5px;background:#e6edf7"></div>
<div class="a" style="left:8px;top:281px;width:30px;height:5px;background:#e9eff8"></div>
<div class="a" style="left:8px;top:286px;width:29px;height:690px;background:#fff"></div>
<div class="a" style="left:8px;top:286px;width:29px;height:26px;background:#e9f0fa;border-bottom:1px solid #8ea3c1"></div>
<div class="a" style="left:8px;top:312px;width:29px;height:26px;background:#e9f0fa;border-bottom:1px solid #8ea3c1"></div>
<div class="a" style="left:8px;top:338px;width:29px;height:26px;background:#e9f0fa;border-bottom:1px solid #8ea3c1"></div>
<div class="a" style="left:8px;top:364px;width:29px;height:26px;background:#e9f0fa;border-bottom:1px solid #8ea3c1"></div>
<div class="a" style="left:8px;top:390px;width:29px;height:26px;background:#e9f0fa;border-bottom:1px solid #8ea3c1"></div>
<div class="a" style="left:8px;top:416px;width:29px;height:26px;background:#e9f0fa;border-bottom:1px solid #8ea3c1"></div>
<div class="a" style="left:8px;top:442px;width:29px;height:28px;background:#e9f0fa;border-bottom:1px solid #8ea3c1"></div>
<div class="a" style="left:37px;top:286px;width:1px;height:184px;background:#8ea3c1"></div>
<div class="a" style="left:38px;top:286px;width:1870px;height:25px;background:#00ff80"></div>
<div class="a" style="left:38px;top:286px;width:1870px;height:25px;border:1px dotted #0000ff"></div>
<svg class="a" style="left:44px;top:297px;" width="8" height="5" viewBox="0 0 8 5"><path d="M0.7 0.7 L4 4 L7.3 0.7" stroke="#6a6a7a" stroke-width="1.5" fill="none"/></svg>
<svg class="a" style="left:13px;top:294px;" width="5" height="9" viewBox="0 0 5 9"><path d="M0 0 L5 4.5 L0 9 Z" fill="#111"/></svg>
<div class="t" style="left:61.25px;top:291.56px;font-size:14.4px;color:#0000ff;font-weight:bold;-webkit-text-stroke:0.2px #0000ff;letter-spacing:0.018px;">Tên nhóm: Nhà cung cấp</div>
<div class="a" style="left:38px;top:311px;width:21px;height:130px;background:#fff"></div>
<div class="a" style="left:58px;top:337px;width:1850px;height:1px;background:#c4d7f0"></div>
<div class="t" style="left:63.00px;top:316.65px;font-size:14px;color:#000;transform:scaleX(1.0210);transform-origin:0 0;">14312</div>
<div class="t" style="left:445.50px;top:316.65px;font-size:14px;color:#000;transform:scaleX(0.9639);transform-origin:0 0;">Nhà cung cấp Apple Việt Nam</div>
<div class="t" style="left:888.42px;top:316.65px;font-size:14px;color:#000;letter-spacing:0.350px;">0.</div>
<div class="t" style="left:1016.40px;top:316.65px;font-size:14px;color:#000;letter-spacing:0.403px;">10,300,000.</div>
<div class="t" style="left:1218.66px;top:316.65px;font-size:14px;color:#000;letter-spacing:0.397px;">1,000,000.</div>
<div class="t" style="left:1430.42px;top:316.65px;font-size:14px;color:#000;letter-spacing:0.350px;">0.</div>
<div class="t" style="left:1568.66px;top:316.65px;font-size:14px;color:#000;letter-spacing:0.397px;">9,000,000.</div>
<div class="t" style="left:1847.03px;top:316.65px;font-size:14px;color:#000;letter-spacing:0.409px;">300,000.</div>
<div class="a" style="left:58px;top:363px;width:1850px;height:1px;background:#c4d7f0"></div>
<div class="t" style="left:63.00px;top:342.65px;font-size:14px;color:#000;transform:scaleX(1.0210);transform-origin:0 0;">14315</div>
<div class="t" style="left:445.50px;top:342.65px;font-size:14px;color:#000;transform:scaleX(0.9902);transform-origin:0 0;">Nhà cung cấp Sony</div>
<div class="t" style="left:888.42px;top:342.65px;font-size:14px;color:#000;letter-spacing:0.350px;">0.</div>
<div class="t" style="left:1082.42px;top:342.65px;font-size:14px;color:#000;letter-spacing:0.350px;">0.</div>
<div class="t" style="left:1276.42px;top:342.65px;font-size:14px;color:#000;letter-spacing:0.350px;">0.</div>
<div class="t" style="left:1430.42px;top:342.65px;font-size:14px;color:#000;letter-spacing:0.350px;">0.</div>
<div class="t" style="left:1626.42px;top:342.65px;font-size:14px;color:#000;letter-spacing:0.350px;">0.</div>
<div class="t" style="left:1892.42px;top:342.65px;font-size:14px;color:#000;letter-spacing:0.350px;">0.</div>
<div class="a" style="left:58px;top:389px;width:1850px;height:1px;background:#c4d7f0"></div>
<div class="t" style="left:63.00px;top:368.65px;font-size:14px;color:#000;transform:scaleX(0.9313);transform-origin:0 0;">NCC001</div>
<div class="t" style="left:445.50px;top:368.65px;font-size:14px;color:#000;transform:scaleX(0.9527);transform-origin:0 0;">Điện Máy Samsung VietNam</div>
<div class="t" style="left:822.40px;top:368.65px;font-size:14px;color:#000;letter-spacing:0.403px;">50,000,000.</div>
<div class="t" style="left:1016.40px;top:368.65px;font-size:14px;color:#000;letter-spacing:0.403px;">34,900,000.</div>
<div class="t" style="left:1218.66px;top:368.65px;font-size:14px;color:#000;letter-spacing:0.397px;">8,900,000.</div>
<div class="t" style="left:1430.42px;top:368.65px;font-size:14px;color:#000;letter-spacing:0.350px;">0.</div>
<div class="t" style="left:1560.40px;top:368.65px;font-size:14px;color:#000;letter-spacing:0.403px;">10,800,000.</div>
<div class="t" style="left:1826.40px;top:368.65px;font-size:14px;color:#000;letter-spacing:0.403px;">65,200,000.</div>
<div class="a" style="left:58px;top:415px;width:1850px;height:1px;background:#c4d7f0"></div>
<div class="t" style="left:63.00px;top:394.65px;font-size:14px;color:#000;transform:scaleX(0.9678);transform-origin:0 0;">NCC0005</div>
<div class="t" style="left:445.50px;top:394.65px;font-size:14px;color:#000;transform:scaleX(0.9666);transform-origin:0 0;">Lenovo VietNam</div>
<div class="t" style="left:888.42px;top:394.65px;font-size:14px;color:#000;letter-spacing:0.350px;">0.</div>
<div class="t" style="left:1082.42px;top:394.65px;font-size:14px;color:#000;letter-spacing:0.350px;">0.</div>
<div class="t" style="left:1276.42px;top:394.65px;font-size:14px;color:#000;letter-spacing:0.350px;">0.</div>
<div class="t" style="left:1430.42px;top:394.65px;font-size:14px;color:#000;letter-spacing:0.350px;">0.</div>
<div class="t" style="left:1626.42px;top:394.65px;font-size:14px;color:#000;letter-spacing:0.350px;">0.</div>
<div class="t" style="left:1892.42px;top:394.65px;font-size:14px;color:#000;letter-spacing:0.350px;">0.</div>
<div class="a" style="left:58px;top:441px;width:1850px;height:1px;background:#c4d7f0"></div>
<div class="t" style="left:63.00px;top:420.65px;font-size:14px;color:#000;transform:scaleX(0.9678);transform-origin:0 0;">NCC0006</div>
<div class="t" style="left:445.50px;top:420.65px;font-size:14px;color:#000;transform:scaleX(0.9538);transform-origin:0 0;">Nhà cung cấp Xiaomi VietNam</div>
<div class="t" style="left:888.42px;top:420.65px;font-size:14px;color:#000;letter-spacing:0.350px;">0.</div>
<div class="t" style="left:1082.42px;top:420.65px;font-size:14px;color:#000;letter-spacing:0.350px;">0.</div>
<div class="t" style="left:1231.03px;top:420.65px;font-size:14px;color:#000;letter-spacing:0.409px;">700,000.</div>
<div class="t" style="left:1430.42px;top:420.65px;font-size:14px;color:#000;letter-spacing:0.350px;">0.</div>
<div class="t" style="left:1626.42px;top:420.65px;font-size:14px;color:#000;letter-spacing:0.350px;">0.</div>
<div class="t" style="left:1842.09px;top:420.65px;font-size:14px;color:#000;letter-spacing:0.394px;">-700,000.</div>
<div class="a" style="left:58px;top:311px;width:1px;height:130px;background:#c4d7f0"></div>
<div class="a" style="left:440px;top:311px;width:1px;height:130px;background:#c4d7f0"></div>
<div class="a" style="left:746px;top:311px;width:1px;height:130px;background:#c4d7f0"></div>
<div class="a" style="left:903px;top:311px;width:1px;height:130px;background:#c4d7f0"></div>
<div class="a" style="left:1097px;top:311px;width:1px;height:130px;background:#c4d7f0"></div>
<div class="a" style="left:1291px;top:311px;width:1px;height:130px;background:#c4d7f0"></div>
<div class="a" style="left:1445px;top:311px;width:1px;height:130px;background:#c4d7f0"></div>
<div class="a" style="left:1641px;top:311px;width:1px;height:130px;background:#c4d7f0"></div>
<div class="a" style="left:58px;top:442px;width:1850px;height:1px;background:#8ea3c1"></div>
<div class="a" style="left:59px;top:443px;width:1849px;height:26px;background:linear-gradient(#eef3fa,#dfe8f4)"></div>
<div class="a" style="left:38px;top:469px;width:1870px;height:1px;background:#c4d7f0"></div>
<div class="a" style="left:38px;top:441px;width:20px;height:29px;background:#fff"></div>
<div class="a" style="left:58px;top:441px;width:1px;height:29px;background:#c4d7f0"></div>
<div class="t" style="left:826.07px;top:449.66px;font-size:13.4px;color:#ff00ff;font-weight:bold;-webkit-text-stroke:0.2px #ff00ff;letter-spacing:0.537px;">50,000,000</div>
<div class="a" style="left:902px;top:447px;width:1px;height:18px;background:#8ea3c1"></div>
<div class="t" style="left:1020.07px;top:449.66px;font-size:13.4px;color:#ff00ff;font-weight:bold;-webkit-text-stroke:0.2px #ff00ff;letter-spacing:0.537px;">45,200,000</div>
<div class="a" style="left:1096px;top:447px;width:1px;height:18px;background:#8ea3c1"></div>
<div class="t" style="left:1214.07px;top:449.66px;font-size:13.4px;color:#ff00ff;font-weight:bold;-webkit-text-stroke:0.2px #ff00ff;letter-spacing:0.537px;">10,600,000</div>
<div class="a" style="left:1290px;top:447px;width:1px;height:18px;background:#8ea3c1"></div>
<div class="t" style="left:1433.05px;top:449.66px;font-size:13.4px;color:#ff00ff;font-weight:bold;-webkit-text-stroke:0.2px #ff00ff;">0</div>
<div class="a" style="left:1444px;top:447px;width:1px;height:18px;background:#8ea3c1"></div>
<div class="t" style="left:1564.07px;top:449.66px;font-size:13.4px;color:#ff00ff;font-weight:bold;-webkit-text-stroke:0.2px #ff00ff;letter-spacing:0.537px;">19,800,000</div>
<div class="a" style="left:1640px;top:447px;width:1px;height:18px;background:#8ea3c1"></div>
<div class="t" style="left:1829.07px;top:449.66px;font-size:13.4px;color:#ff00ff;font-weight:bold;-webkit-text-stroke:0.2px #ff00ff;letter-spacing:0.537px;">64,800,000</div>
<div class="a" style="left:1905px;top:447px;width:1px;height:18px;background:#8ea3c1"></div>
<div class="a" style="left:8px;top:975px;width:1900px;height:1px;background:#8ea3c1"></div>
<div class="a" style="left:8px;top:976px;width:1900px;height:27px;background:linear-gradient(#edf2f9,#e0e9f5)"></div>
<div class="t" style="left:818.18px;top:982.98px;font-size:14.2px;color:#ff0000;font-weight:bold;-webkit-text-stroke:0.2px #ff0000;letter-spacing:0.995px;">50,000,000</div>
<div class="a" style="left:902px;top:980px;width:1px;height:19px;background:#8ea3c1"></div>
<div class="t" style="left:1012.18px;top:982.98px;font-size:14.2px;color:#ff0000;font-weight:bold;-webkit-text-stroke:0.2px #ff0000;letter-spacing:0.995px;">45,200,000</div>
<div class="a" style="left:1096px;top:980px;width:1px;height:19px;background:#8ea3c1"></div>
<div class="t" style="left:1206.18px;top:982.98px;font-size:14.2px;color:#ff0000;font-weight:bold;-webkit-text-stroke:0.2px #ff0000;letter-spacing:0.995px;">10,600,000</div>
<div class="a" style="left:1290px;top:980px;width:1px;height:19px;background:#8ea3c1"></div>
<div class="t" style="left:1433.30px;top:982.98px;font-size:14.2px;color:#ff0000;font-weight:bold;-webkit-text-stroke:0.2px #ff0000;">0</div>
<div class="a" style="left:1444px;top:980px;width:1px;height:19px;background:#8ea3c1"></div>
<div class="t" style="left:1556.18px;top:982.98px;font-size:14.2px;color:#ff0000;font-weight:bold;-webkit-text-stroke:0.2px #ff0000;letter-spacing:0.995px;">19,800,000</div>
<div class="a" style="left:1640px;top:980px;width:1px;height:19px;background:#8ea3c1"></div>
<div class="t" style="left:1821.18px;top:982.98px;font-size:14.2px;color:#ff0000;font-weight:bold;-webkit-text-stroke:0.2px #ff0000;letter-spacing:0.995px;">64,800,000</div>
<div class="a" style="left:1905px;top:980px;width:1px;height:19px;background:#8ea3c1"></div>
<div class="a" style="left:0px;top:1015px;width:1920px;height:25px;background:linear-gradient(#dde7f3,#b9cbe2)"></div>
<div class="a" style="left:0px;top:1015px;width:1920px;height:1px;background:#8fa6c4"></div>
<div class="a" style="left:0px;top:1016px;width:1920px;height:1px;background:#f4f8fd"></div>
<div class="t" style="left:6.00px;top:1023.81px;font-size:11.8px;color:#15294b;font-weight:bold;-webkit-text-stroke:0.2px #15294b;letter-spacing:-0.043px;">Chào mừng: Administrator đến với phần mềm MekongSoft</div>
<div class="a" style="left:345px;top:1023px;width:1px;height:13px;background:#a9bbd4"></div>
<div class="t" style="left:357.00px;top:1023.81px;font-size:11.8px;color:#15294b;font-weight:bold;-webkit-text-stroke:0.2px #15294b;letter-spacing:-0.113px;">Version: 4.8.0</div>
<div class="a" style="left:444px;top:1023px;width:1px;height:13px;background:#a9bbd4"></div>
<div class="t" style="left:455.40px;top:1023.81px;font-size:11.8px;color:#ff0000;font-weight:bold;-webkit-text-stroke:0.2px #ff0000;letter-spacing:0.219px;">Ngày: 14/11/2023 10:01:34 SA</div>
<div class="a" style="left:1617px;top:1020px;width:1px;height:18px;background:#a9bbd4"></div>
<div class="t" style="left:1626.70px;top:1023.81px;font-size:11.8px;color:#15294b;font-weight:bold;-webkit-text-stroke:0.2px #15294b;letter-spacing:-0.007px;">@2023 MekongSoft. Thông tin hỗ trợ: 0901 000 508</div>
<svg class="a" style="left:465.5px;top:405.7px;" width="13" height="20" viewBox="0 0 13 20"><path d="M0.5 0.5 V16.5 L4.3 12.8 L7 18.6 L9.2 17.7 L6.6 12.2 L11.8 12.2 Z" fill="#fff" stroke="#111" stroke-width="1" stroke-linejoin="miter"/></svg>
</body></html>
